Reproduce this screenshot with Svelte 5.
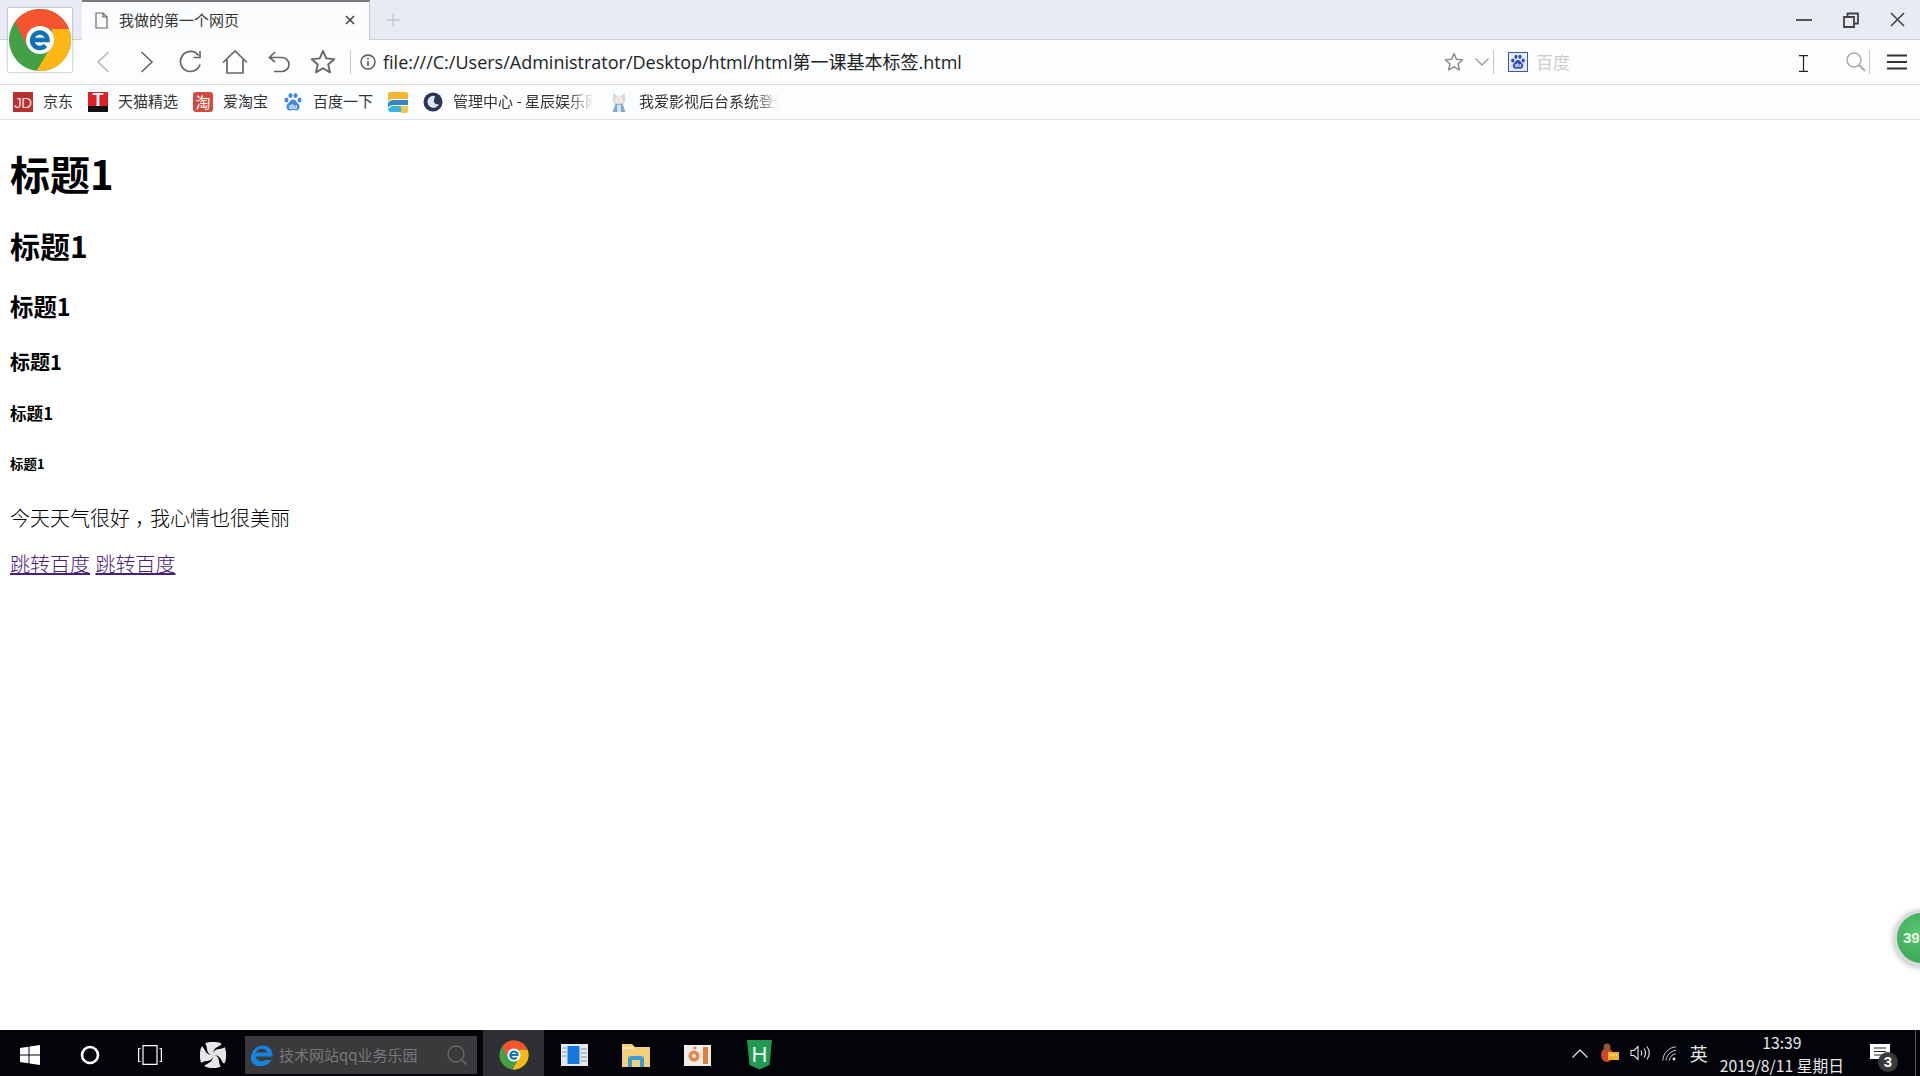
<script>
  // 书签栏数据
  const bookmarks = [
    { id: 'jd', label: '京东' },
    { id: 'tmall', label: '天猫精选' },
    { id: 'taobao', label: '爱淘宝' },
    { id: 'baidu', label: '百度一下' },
    { id: 'stripes', label: '' },
    { id: 'moon', label: '管理中心 - 星辰娱乐网', fadeEnd: 141 },
    { id: 'anime', label: '我爱影视后台系统登录', fadeEnd: 140 }
  ];

  const bladeAngles = [0, 90, 180, 270];
</script>

{#snippet chromeLogo(size)}
  <svg width={size} height={size} viewBox="0 0 64 64">
    <circle cx="32" cy="32" r="31" fill="#43a047" />
    <path d="M61 21A31 31 0 0 1 28.7 62.8L41 42L44 21Z" fill="#fdb714" />
    <path d="M7 13.8A31 31 0 0 1 61 21H32L19 38Z" fill="#f4552f" />
    <circle cx="32" cy="32" r="14" fill="#f3f8fb" />
    <path d="M24.500 32H39.500A7.700 7.700 0 1 0 37.500 37.500" fill="none" stroke="#0f72b8" stroke-width="4.500" />
  </svg>
{/snippet}

{#snippet star(size, color)}
  <svg width={size} height={size} viewBox="0 0 24 24">
    <path d="M12 1.800l3 6.900 7.400.7-5.600 4.900 1.700 7.300-6.500-3.800-6.500 3.800 1.700-7.300-5.600-4.900 7.400-.7z" fill="none" stroke={color} stroke-width="1.700" stroke-linejoin="round" />
  </svg>
{/snippet}

{#snippet paw(size, color)}
  <svg width={size} height={size} viewBox="0 0 20 20" fill={color}>
    <ellipse cx="3.500" cy="8" rx="2" ry="2.500" />
    <ellipse cx="7.500" cy="3.500" rx="2" ry="2.600" />
    <ellipse cx="12.500" cy="3.500" rx="2" ry="2.600" />
    <ellipse cx="16.500" cy="8" rx="2" ry="2.500" />
    <path d="M10 7.500c3 0 3.500 3 5.500 4.500 2 2 1 6.500-2.500 6.500-1.300 0-2-.4-3-.4s-1.700.4-3 .4c-3.500 0-4.500-4.500-2.500-6.500C6.500 10.500 7 7.500 10 7.500z" />
    <text x="10" y="16.500" text-anchor="middle" font-size="6.500" font-weight="700" font-family="Liberation Sans, sans-serif" fill="#fff">du</text>
  </svg>
{/snippet}

<div class="screen">
  <div class="tabbar">
    <div class="tab">
      <svg class="tab-page" width="13" height="17" viewBox="0 0 13 17">
        <path d="M1 1h7l4 4v11H1zM8 1v4h4" fill="none" stroke="#666" stroke-width="1.200" />
      </svg>
      <span class="tab-title">我做的第一个网页</span>
      <svg class="tab-close" width="10" height="10" viewBox="0 0 10 10">
        <path d="M1 1l8 8M9 1l-8 8" stroke="#444" stroke-width="1.600" />
      </svg>
    </div>
    <svg class="tab-new" width="14" height="14" viewBox="0 0 14 14">
      <path d="M7 0v14M0 7h14" stroke="#c4c6cc" stroke-width="1.300" />
    </svg>
    <div class="win-controls">
      <span class="win-btn">
        <svg width="16" height="4" viewBox="0 0 16 4"><path d="M0 2h16" stroke="#555" stroke-width="2" /></svg>
      </span>
      <span class="win-btn">
        <svg width="16" height="16" viewBox="0 0 16 16">
          <path d="M1 5h10v10H1zM4.500 5V1.500H15V11.500H11" fill="none" stroke="#444" stroke-width="1.800" />
        </svg>
      </span>
      <span class="win-btn">
        <svg width="15" height="15" viewBox="0 0 15 15"><path d="M1 1l13 13M14 1L1 14" stroke="#444" stroke-width="1.600" /></svg>
      </span>
    </div>
  </div>

  <div class="toolbar">
    <span class="tool">
      <svg width="14" height="22" viewBox="0 0 14 22"><path d="M12.500 1L2 11l10.500 10" fill="none" stroke="#b8b8b8" stroke-width="1.600" /></svg>
    </span>
    <span class="tool">
      <svg width="14" height="22" viewBox="0 0 14 22"><path d="M1.500 1L12 11 1.500 21" fill="none" stroke="#666" stroke-width="1.600" /></svg>
    </span>
    <span class="tool">
      <svg width="24" height="24" viewBox="0 0 24 24">
        <path d="M21 14.500A10 10 0 1 1 19.500 5.500M21 1v6.500h-6.500" fill="none" stroke="#666" stroke-width="1.700" />
      </svg>
    </span>
    <span class="tool">
      <svg width="26" height="24" viewBox="0 0 26 24">
        <path d="M1 12.500L13 1l12 11.500M5 9.500V23h16V9.500" fill="none" stroke="#666" stroke-width="1.700" />
      </svg>
    </span>
    <span class="tool">
      <svg width="22" height="22" viewBox="0 0 22 22">
        <path d="M7 1L1.500 6.500 7 11M2 6.500h12a6.800 6.800 0 0 1 0 14H6" fill="none" stroke="#666" stroke-width="1.700" />
      </svg>
    </span>
    <span class="tool">{@render star(26, '#666')}</span>
    <span class="divider first"></span>
    <svg class="info" width="16" height="16" viewBox="0 0 16 16">
      <circle cx="8" cy="8" r="7" fill="none" stroke="#555" stroke-width="1.400" />
      <path d="M8 7v5M8 4v1.600" stroke="#555" stroke-width="1.600" />
    </svg>
    <span class="url">file:///C:/Users/Administrator/Desktop/html/html第一课基本标签.html</span>

    <span class="star-small">{@render star(20, '#888')}</span>
    <svg class="chevron" width="14" height="8" viewBox="0 0 14 8"><path d="M.5.500L7 7l6.500-6.500" fill="none" stroke="#999" stroke-width="1.300" /></svg>
    <span class="divider"></span>
    <span class="engine">{@render paw(16, '#2f4db5')}</span>
    <span class="engine-name">百度</span>
    <svg class="ibeam" width="9" height="17" viewBox="0 0 9 17"><path d="M0 .700h9M0 16.300h9M4.500 .700v15.600" fill="none" stroke="#222" stroke-width="1.200" /></svg>
    <svg class="search" width="20" height="20" viewBox="0 0 20 20">
      <circle cx="8" cy="8" r="7" fill="none" stroke="#aaa" stroke-width="1.500" />
      <path d="M13 13l6 6" stroke="#aaa" stroke-width="2" />
    </svg>
    <span class="divider"></span>
    <svg class="menu" width="20" height="16" viewBox="0 0 20 16"><path d="M0 1.500h20M0 8h20M0 14.500h20" stroke="#333" stroke-width="2" /></svg>
  </div>

  <div class="bookmarks">
    {#each bookmarks as b}
      <div class="bookmark">
        {#if b.id === 'jd'}
          <span class="bm-icon jd">JD</span>
        {:else if b.id === 'tmall'}
          <span class="bm-icon tmall">T</span>
        {:else if b.id === 'taobao'}
          <span class="bm-icon taobao">淘</span>
        {:else if b.id === 'baidu'}
          <span class="bm-icon">{@render paw(20, '#3f88dc')}</span>
        {:else if b.id === 'stripes'}
          <svg class="bm-icon stripes" width="20" height="21" viewBox="0 0 20 21">
            <path d="M2 0h16q2 0 2 2v5H6q-4 0-6 2V2q0-2 2-2z" fill="#f2b632" />
            <path d="M0 11q2-3 6-3h14v5H6q-4 0-6 2z" fill="#2f86c9" />
            <path d="M0 17q2-3 6-3h7v6H3q-3 0-3-3z" fill="#35b6dc" />
            <path d="M13 14h7v5q0 2-2 2h-5z" fill="#f6c44a" />
          </svg>
        {:else if b.id === 'moon'}
          <svg class="bm-icon" width="20" height="20" viewBox="0 0 20 20">
            <circle cx="10" cy="10" r="9.500" fill="#2a3558" />
            <path d="M12 4a6 6 0 1 0 4 8c-3 1-6-1-5-4z" fill="#dfe5f2" />
          </svg>
        {:else}
          <svg class="bm-icon" width="20" height="22" viewBox="0 0 20 22">
            <path d="M4 1l3 3h6l3-3 1 8-2 4H5L3 9z" fill="#cfd6e4" />
            <circle cx="10" cy="9" r="4.500" fill="#f6e6e0" />
            <path d="M3 22l3-9h8l3 9z" fill="#7fa9cf" />
            <path d="M8 14h4v8H8z" fill="#dbe7f3" />
          </svg>
        {/if}
        {#if b.label}
          <span class="bm-label" class:fade={b.fadeEnd} style:--fade-end={b.fadeEnd ? b.fadeEnd + 'px' : null}>{b.label}</span>
        {/if}
      </div>
    {/each}
  </div>

  <main class="viewport">
    <div class="page">
      <h1>标题1</h1>
      <h2>标题1</h2>
      <h3>标题1</h3>
      <h4>标题1</h4>
      <h5>标题1</h5>
      <h6>标题1</h6>
      <p>今天天气很好<span class="comma">，</span>我心情也很美丽</p>
      <p class="links"><a href="#top">跳转百度</a> <a href="#top">跳转百度</a></p>
    </div>
  </main>

  <div class="taskbar">
    <span class="task-slot">
      <svg width="20" height="20" viewBox="0 0 20 20" fill="#fff">
        <path d="M0 3l8.500-1.200V9.500H0zM9.500 1.600L20 0v9.500H9.500zM0 10.500h8.500v7.700L0 17zM9.500 10.500H20V20L9.500 18.400z" />
      </svg>
    </span>
    <span class="task-slot">
      <svg width="20" height="20" viewBox="0 0 20 20"><circle cx="10" cy="10" r="8" fill="none" stroke="#fff" stroke-width="2.600" /></svg>
    </span>
    <span class="task-slot">
      <svg width="24" height="20" viewBox="0 0 24 20" fill="none" stroke="#fff" stroke-width="1.200">
        <path d="M5 .600h14v18.800H5zM2.500 3.500H.600v13h1.900M21.500 3.500h1.900v13h-1.900" />
      </svg>
    </span>
    <span class="task-slot pinwheel">
      <svg width="26" height="26" viewBox="0 0 26 26">
        <rect width="26" height="26" rx="10" fill="#e6e6e6" />
        {#each bladeAngles as angle}
          <path d="M13 13C13 9 15.500 7.500 19 7c3-.4 5.500-1 7-3v-4h-4c1 2.500-3 4-5.500 5.500-2.500 1.500-3.500 4-3.500 7.500z" fill="#02040a" transform="rotate({angle} 13 13)" />
        {/each}
      </svg>
    </span>

    <div class="task-search">
      <svg width="24" height="24" viewBox="0 0 24 24">
        <path d="M5.500 13.500H22.500C23 6 18 2.500 12.500 2.500 7 2.500 2 7 .900 14 .200 20 4.500 23 10 23c5 0 9-1.500 11.500-6H15c-1 2-7 2.500-9.500-3.500zM6 9.500c1-5 10-5 11 0z" fill="#1484e0" fill-rule="evenodd" />
      </svg>
      <span class="task-search-text">技术网站qq业务乐园</span>
      <svg width="20" height="20" viewBox="0 0 20 20">
        <circle cx="9" cy="9" r="8" fill="none" stroke="#6c6c6c" stroke-width="1.300" />
        <path d="M14.500 14.500l5 5" stroke="#6c6c6c" stroke-width="1.500" />
      </svg>
    </div>

    <span class="task-app active">{@render chromeLogo(30)}</span>
    <span class="task-app">
      <svg width="27" height="22" viewBox="0 0 27 22">
        <path d="M0 0h27v22H0z" fill="#e4e8ee" />
        <path d="M6.500 2h12v18h-12z" fill="#1778e0" />
        <path d="M1.500 4h4M1.500 8h4M1.500 12h4M20 5h6M20 9h6M20 13h6M20 17h6" stroke="#8a93a0" stroke-width="1" />
      </svg>
    </span>
    <span class="task-app">
      <svg width="28" height="24" viewBox="0 0 28 24">
        <path d="M0 1h10l3 3h15v20H0z" fill="#f3cf77" />
        <path d="M0 4h12v2H0z" fill="#fbe9b5" />
        <path d="M6 24v-8q0-3 3-3h10q3 0 3 3v8h-4v-7H10v7z" fill="#3f9bd6" />
      </svg>
    </span>
    <span class="task-app shifted">
      <svg width="27" height="22" viewBox="0 0 27 22">
        <path d="M0 1h27v21H0z" fill="#f1eeea" />
        <circle cx="10" cy="12" r="5.500" fill="#e8874a" />
        <circle cx="10" cy="12" r="2" fill="#f1eeea" />
        <path d="M19 3h5v17h-5z" fill="#e0803c" />
        <circle cx="11" cy="4" r="1.500" fill="#e8874a" />
      </svg>
    </span>
    <span class="task-app shifted">
      <span class="hbuilder">H</span>
    </span>

    <div class="tray">
      <svg class="tray-item" width="16" height="9" viewBox="0 0 16 9"><path d="M.5 8.500L8 1l7.500 7.500" fill="none" stroke="#ddd" stroke-width="1.300" /></svg>
      <svg class="tray-item" width="20" height="20" viewBox="0 0 20 20">
        <ellipse cx="8" cy="12" rx="6" ry="7" fill="#c9482c" />
        <circle cx="8" cy="4" r="3.500" fill="#8a5a34" />
        <path d="M9 9h11v8H9z" fill="#f4b02a" />
        <path d="M11 12h1.500M14 12h1.500M17 12h1" stroke="#fff" stroke-width="1.200" />
      </svg>
      <svg class="tray-item" width="21" height="16" viewBox="0 0 21 16" fill="none" stroke="#e6e6e6" stroke-width="1.100">
        <path d="M1 5.500h3L8 1.500v13l-4-4H1zM11 5.500q1.500 2.500 0 5M14 3.500q3 4.500 0 9M17 1.500q4.500 6.500 0 13" />
      </svg>
      <svg class="tray-item" width="15" height="15" viewBox="0 0 15 15" fill="none" stroke="#cfcfcf" stroke-width="1">
        <path d="M.8 14.500C1 8 6 1.500 14 .8M4 14.500C4.500 10 8 5 14 4.300M7.200 14.500c.3-3 2.500-6 6.500-6.700" />
        <circle cx="12" cy="13" r="1.400" fill="#eee" stroke="none" />
      </svg>
      <span class="tray-lang">英</span>
      <div class="clock">
        <span>13:39</span>
        <span>2019/8/11 星期日</span>
      </div>
      <div class="notify">
        <svg width="20" height="18" viewBox="0 0 20 18">
          <path d="M0 0h20v15H0z" fill="#fff" />
          <path d="M4 4h12M4 7.500h12M4 11h8" stroke="#222" stroke-width="1.200" />
        </svg>
        <span class="notify-badge">3</span>
      </div>
      <span class="show-desktop"></span>
    </div>
  </div>

  <!-- 左上角浏览器图标，盖在标签栏上 -->
  <div class="logo">{@render chromeLogo(64)}</div>

  <!-- 右侧悬浮球 -->
  <div class="float-ball"><span>39</span></div>
</div>

<style>
  :global(body) {
    margin: 0;
    background: #fff;
  }

  .screen {
    position: relative;
    display: flex;
    flex-direction: column;
    height: 1076px;
    overflow: hidden;
    font-family: "Noto Sans CJK SC", "Liberation Sans", sans-serif;
    color: #222;
  }

  /* 标签栏 */
  .tabbar {
    display: flex;
    align-items: center;
    flex: none;
    height: 39px;
    padding-left: 82px;
    background: #e8ebf5;
    border-bottom: 1px solid #cfd1d6;
  }

  .tab {
    display: flex;
    align-items: center;
    align-self: flex-start;
    box-sizing: border-box;
    width: 288px;
    height: 40px;
    padding: 0 0 2px 13px;
    background: #fbfcfe;
    border-top: 2px solid #77787c;
    border-right: 1px solid #c9cbd1;
  }

  .tab-title {
    margin-left: 11px;
    font-size: 15px;
    line-height: 20px;
    color: #333;
  }

  .tab-close {
    margin-left: auto;
    margin-right: 14px;
  }

  .tab-new {
    margin-left: 16px;
  }

  .win-controls {
    display: flex;
    margin-left: auto;
    margin-right: -1px;
  }

  .win-btn {
    display: flex;
    align-items: center;
    justify-content: center;
    width: 47px;
    height: 38px;
  }

  /* 地址栏 */
  .toolbar {
    display: flex;
    align-items: center;
    flex: none;
    height: 44px;
    padding-left: 81px;
    background: #fbfdfe;
    border-bottom: 1px solid #dcdee2;
  }

  .tool {
    display: flex;
    align-items: center;
    justify-content: center;
    width: 44px;
    height: 44px;
  }

  .divider {
    flex: none;
    width: 1px;
    height: 24px;
    background: #c4c6ca;
  }

  .divider.first {
    margin-left: 5px;
  }

  .info {
    margin-left: 9px;
  }

  .url {
    flex: none;
    width: 1040px;
    margin-left: 7px;
    font-family: "Open Sans", "Noto Sans CJK SC", sans-serif;
    font-size: 18px;
    line-height: 26px;
    color: #222;
  }

  .star-small {
    display: flex;
    margin-left: 21px;
  }

  .chevron {
    margin-left: 11px;
  }

  .divider + .engine {
    margin-left: 14px;
  }

  .chevron + .divider {
    margin-left: 4px;
  }

  .engine {
    display: flex;
    align-items: center;
    justify-content: center;
    box-sizing: border-box;
    width: 20px;
    height: 20px;
    border: 1px solid #3c55ad;
    background: #e6ebf8;
  }

  .engine-name {
    width: 261px;
    margin-left: 8px;
    font-size: 17px;
    line-height: 24px;
    color: #cdcdcd;
  }

  .ibeam {
    margin-left: 2px;
    margin-top: 3px;
  }

  .search {
    margin-left: 38px;
  }

  .search + .divider {
    margin-left: 3px;
  }

  .menu {
    margin-left: 17px;
  }

  /* 书签栏 */
  .bookmarks {
    display: flex;
    align-items: center;
    gap: 15px;
    flex: none;
    height: 34px;
    padding-left: 13px;
    background: #fbfdfe;
    border-bottom: 1px solid #e2e3e6;
  }

  .bookmark {
    display: flex;
    align-items: center;
    gap: 10px;
  }

  .bm-icon {
    display: flex;
    align-items: center;
    justify-content: center;
    flex: none;
    width: 20px;
    height: 20px;
  }

  .stripes {
    height: 21px;
  }

  .jd {
    background: #b8312f;
    color: #f4dede;
    font-family: "Liberation Sans", sans-serif;
    font-size: 15px;
    letter-spacing: -.5px;
  }

  .tmall {
    background: linear-gradient(#e11f26 70%, #111 72%);
    color: #fff;
    font-family: "Liberation Sans", sans-serif;
    font-size: 18px;
    font-weight: 700;
    line-height: 16px;
    align-items: flex-start;
  }

  .taobao {
    background: #d2493f;
    border-radius: 3px;
    color: #fff;
    font-size: 15px;
    line-height: 20px;
  }

  .bm-label {
    flex: none;
    padding-bottom: 2px;
    font-size: 15px;
    line-height: 20px;
    white-space: nowrap;
    color: #333;
  }

  /* 最后一个字淡出，跟截图一样 */
  .bm-label.fade {
    margin-right: -6px;
    mask-image: linear-gradient(to right, #000 calc(var(--fade-end) - 25px), transparent var(--fade-end));
  }

  /* 网页内容，外边距按 125% 缩放 */
  .viewport {
    flex: 1;
    min-height: 0;
    overflow: hidden;
    background: #fff;
    color: #000;
  }

  .page {
    margin: 10px;
    font-size: 20px;
    line-height: 1.32;
  }

  h1, h2, h3, h4, h5, h6 {
    font-weight: 700;
  }

  h1 { font-size: 40px; margin: 26.8px 0; }
  h2 { font-size: 30px; margin: 24.9px 0; }
  h3 { font-size: 23.4px; margin: 23.4px 0; }
  h4 { font-size: 20px; margin: 27.4px 0 26.6px; }
  h5 { font-size: 16.6px; margin: 27.7px 0; }
  h6 { font-size: 13.4px; margin: 30px 0 32px; }

  p {
    margin: 20px 0;
    font-weight: 300;
  }

  .links {
    margin-top: 17px;
    word-spacing: 1px;
  }

  /* 截图里逗号在字格中间：半宽字形加左右留白 */
  .comma {
    margin: 0 5px;
    font-feature-settings: "halt";
  }

  a {
    color: #4a1d80;
  }

  /* 任务栏 */
  .taskbar {
    display: flex;
    align-items: center;
    flex: none;
    height: 46px;
    background: #02040a;
  }

  .task-slot {
    display: flex;
    align-items: center;
    justify-content: center;
    box-sizing: border-box;
    width: 60px;
    height: 46px;
    padding-top: 3px;
  }

  .task-slot.pinwheel {
    padding-left: 5px;
  }

  .task-search {
    display: flex;
    align-items: center;
    box-sizing: border-box;
    width: 232px;
    height: 38px;
    margin-left: 5px;
    margin-top: 4px;
    padding: 0 10px 0 5px;
    background: #3a3a3c;
  }

  .task-search-text {
    flex: 1;
    margin-left: 5px;
    font-size: 15px;
    line-height: 20px;
    color: #77787a;
  }

  .task-app {
    display: flex;
    align-items: center;
    justify-content: center;
    box-sizing: border-box;
    width: 61px;
    height: 46px;
    padding-top: 3px;
  }

  .task-app.active {
    margin-left: 6px;
    background: #2e3034;
  }

  .task-app.shifted {
    margin-left: 1px;
  }

  .hbuilder {
    display: flex;
    align-items: center;
    justify-content: center;
    width: 25px;
    height: 30px;
    background: #1f9a50;
    clip-path: polygon(0 0, 100% 0, 90% 85%, 50% 100%, 10% 85%);
    color: #e9f8ee;
    font-family: "Liberation Sans", sans-serif;
    font-size: 22px;
  }

  .tray {
    display: flex;
    align-items: center;
    margin-left: auto;
    height: 46px;
    color: #e8e8e8;
  }

  .tray-item + .tray-item {
    margin-left: 11px;
  }

  .tray-lang {
    margin-left: 13px;
    font-size: 18px;
    line-height: 24px;
  }

  .clock {
    display: flex;
    flex-direction: column;
    align-items: center;
    margin-left: 12px;
    padding-top: 1px;
    font-size: 15.75px;
    line-height: 23px;
  }

  .notify {
    position: relative;
    display: flex;
    margin-left: 26px;
    margin-right: 25px;
  }

  .notify-badge {
    position: absolute;
    right: -8px;
    bottom: -10px;
    width: 20px;
    height: 20px;
    border-radius: 50%;
    background: #3a3a3c;
    color: #fff;
    font-family: "Liberation Sans", sans-serif;
    font-size: 15px;
    font-weight: 700;
    line-height: 20px;
    text-align: center;
  }

  .show-desktop {
    width: 1px;
    height: 46px;
    margin-right: 4px;
    background: #55575c;
  }

  .logo {
    position: absolute;
    left: 8px;
    top: 8px;
    width: 64px;
    height: 64px;
    background: #fff;
    box-shadow: 0 0 2px rgba(0, 0, 0, .45);
  }

  .float-ball {
    position: absolute;
    left: 1894px;
    top: 910px;
    box-sizing: border-box;
    width: 56px;
    height: 56px;
    padding-left: 6px;
    border: 3px solid #d5dcd8;
    border-radius: 50%;
    background: radial-gradient(circle at 40% 40%, #5cc472, #2c9c4c);
    box-shadow: 0 1px 6px rgba(0, 0, 0, .35);
    color: #e9fbe8;
    font-family: "Liberation Sans", sans-serif;
    font-size: 15px;
    font-weight: 700;
    line-height: 50px;
  }
</style>
